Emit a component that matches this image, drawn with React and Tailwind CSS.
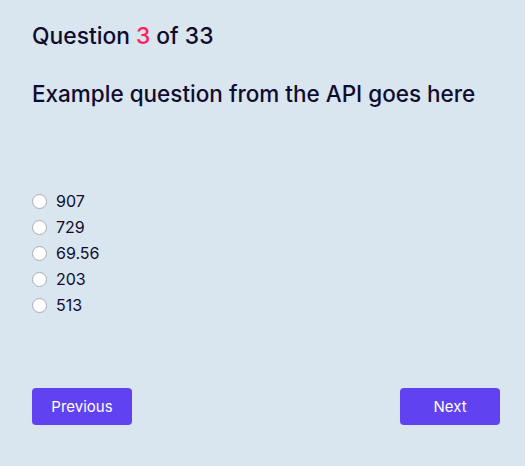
import React from "react";

export default function App() {
  const options = ["907", "729", "69.56", "203", "513"];
  return (
    <div className="w-[525px] h-[466px] bg-[#d9e5ef] text-[#100c2e] pl-8 pr-[25px] pt-[21px]" style={{ fontFamily: "Inter, 'Noto Sans', sans-serif" }}>
      <h1 className="text-[22.8px] leading-[30px] font-[450]">
        Question <span className="text-[#ff1f5a]">3</span> of 33
      </h1>
      <h2 className="text-[22.5px] leading-[30px] font-[450] mt-[28px]">
        Example question from the API goes here
      </h2>
      <div className="mt-[79px] flex flex-col">
        {options.map((o) => (
          <label key={o} className="flex items-center h-[26px] text-[16px]">
            <input type="radio" name="q" className="appearance-none w-[15px] h-[15px] rounded-full border border-[#a9adb3] bg-white mr-[9px] m-0" />
            <span>{o}</span>
          </label>
        ))}
      </div>
      <div className="flex justify-between mt-[70px]">
        <button className="w-[100px] h-[37px] rounded bg-[#6142f1] text-white text-[15px] pt-[2px]">Previous</button>
        <button className="w-[100px] h-[37px] rounded bg-[#6142f1] text-white text-[15px] pt-[2px]">Next</button>
      </div>
    </div>
  );
}
